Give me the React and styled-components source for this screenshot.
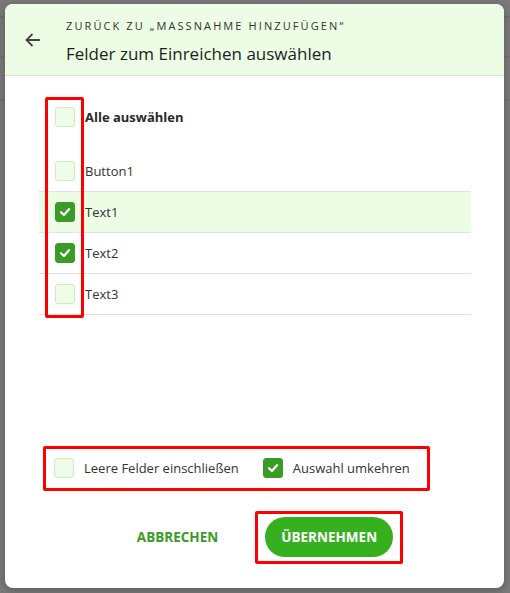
import styled, { createGlobalStyle } from "styled-components";

const GlobalStyle = createGlobalStyle`
  html, body {
    margin: 0;
    padding: 0;
    height: 100%;
  }
  body {
    background: #797979;
    font-family: "Open Sans", "Noto Sans", Arial, sans-serif;
    color: #222;
  }
`;

const fields = [
  { label: "Button1", checked: false },
  { label: "Text1", checked: true, active: true },
  { label: "Text2", checked: true },
  { label: "Text3", checked: false },
];

const Check = ({ checked }) => (
  <Box $checked={checked}>
    {checked && (
      <svg width="14" height="14" viewBox="0 0 14 14">
        <path
          d="M3 7.2 L5.9 10 L11 4.2"
          fill="none"
          stroke="#fff"
          strokeWidth="2.2"
          strokeLinecap="round"
          strokeLinejoin="round"
        />
      </svg>
    )}
  </Box>
);

const App = () => {
  return (
    <>
      <GlobalStyle />
      <Page>
        <Dialog>
          <Header>
            <BackButton aria-label="Zurück">
              <svg width="18" height="18" viewBox="0 0 18 18">
                <path
                  d="M16 9 H2.5 M8.5 3 L2.5 9 L8.5 15"
                  fill="none"
                  stroke="#444"
                  strokeWidth="1.8"
                />
              </svg>
            </BackButton>
            <HeaderText>
              <Overline>Zurück zu „Maßnahme hinzufügen“</Overline>
              <Title>Felder zum Einreichen auswählen</Title>
            </HeaderText>
          </Header>

          <Body>
            <List>
              <AllRow>
                <Check checked={false} />
                <AllLabel>Alle auswählen</AllLabel>
              </AllRow>
              {fields.map((f) => (
                <Row key={f.label} $active={f.active}>
                  <Check checked={f.checked} />
                  <RowLabel>{f.label}</RowLabel>
                </Row>
              ))}
              <Marker $top="0px" $left="6px" $width="39px" $height="221px" />
            </List>

            <Options>
              <Option>
                <Check checked={false} />
                <span>Leere Felder einschließen</span>
              </Option>
              <Option>
                <Check checked={true} />
                <span>Auswahl umkehren</span>
              </Option>
              <Marker $top="-12px" $left="4px" $width="387px" $height="45px" />
            </Options>

            <Footer>
              <TextButton>Abbrechen</TextButton>
              <ApplyWrap>
                <PrimaryButton>Übernehmen</PrimaryButton>
                <Marker $top="-6px" $left="-10px" $width="148px" $height="53px" />
              </ApplyWrap>
            </Footer>
          </Body>
        </Dialog>
      </Page>
    </>
  );
};

const Page = styled.div`
  min-height: 593px;
  padding: 4px 6px 5px 5px;
  box-sizing: border-box;
  background: linear-gradient(
    to bottom,
    transparent 16px,
    #6f6f6f 16px,
    #6f6f6f 18px,
    transparent 18px,
    transparent 56px,
    #717171 56px,
    #717171 58px,
    transparent 58px,
    transparent 99px,
    #727272 99px,
    #727272 101px,
    transparent 101px
  );
`;

const Dialog = styled.div`
  width: 499px;
  height: 584px;
  background: #ffffff;
  border-radius: 8px;
  overflow: hidden;
  display: flex;
  flex-direction: column;
  box-shadow: 0 2px 8px rgba(0, 0, 0, 0.25);
`;

const Header = styled.div`
  height: 72px;
  flex-shrink: 0;
  background: #ecfce5;
  border-bottom: 1px solid #d3e8cb;
  display: flex;
  align-items: center;
  box-sizing: border-box;
  padding-left: 17px;
`;

const BackButton = styled.button`
  border: none;
  background: none;
  padding: 0;
  width: 22px;
  height: 22px;
  display: flex;
  align-items: center;
  justify-content: center;
  margin-right: 22px;
  margin-top: 1px;
  cursor: pointer;
`;

const HeaderText = styled.div`
  display: flex;
  flex-direction: column;
  margin-top: 5px;
`;

const Overline = styled.div`
  font-size: 11px;
  letter-spacing: 2.1px;
  text-transform: uppercase;
  color: #333;
  line-height: 16px;
`;

const Title = styled.div`
  font-size: 17px;
  color: #1e1e1e;
  line-height: 24px;
  margin-top: 8px;
`;

const Body = styled.div`
  flex: 1;
  display: flex;
  flex-direction: column;
  padding: 21px 33px 0 34px;
`;

const List = styled.div`
  position: relative;
  flex: 1;
`;

const AllRow = styled.div`
  display: flex;
  align-items: center;
  gap: 10px;
  height: 40px;
  padding-left: 16px;
  margin-bottom: 14px;
`;

const AllLabel = styled.span`
  font-weight: 700;
  font-size: 13px;
  color: #2a2a2a;
`;

const Row = styled.div`
  display: flex;
  align-items: center;
  gap: 10px;
  height: 40px;
  padding-left: 16px;
  border-bottom: 1px solid #e2e2e2;
  background: ${(p) => (p.$active ? "#edfce5" : "transparent")};
`;

const RowLabel = styled.span`
  font-size: 13px;
  color: #333;
`;

const Box = styled.span`
  width: 20px;
  height: 20px;
  box-sizing: border-box;
  border-radius: 3px;
  flex-shrink: 0;
  display: flex;
  align-items: center;
  justify-content: center;
  background: ${(p) => (p.$checked ? "#3a9c27" : "#eefce8")};
  border: 1px solid ${(p) => (p.$checked ? "#3a9c27" : "#c8efbd")};
`;

const Marker = styled.div`
  position: absolute;
  top: ${(p) => p.$top};
  left: ${(p) => p.$left};
  width: ${(p) => p.$width};
  height: ${(p) => p.$height};
  border: 3px solid #ff0000;
  box-sizing: border-box;
  border-radius: 2px;
  pointer-events: none;
`;

const Options = styled.div`
  position: relative;
  display: flex;
  align-items: center;
  gap: 24px;
  padding-left: 15px;
  height: 20px;
  margin-bottom: 39px;
`;

const Option = styled.label`
  display: flex;
  align-items: center;
  gap: 10px;
  font-size: 13px;
  color: #333;
`;

const Footer = styled.div`
  display: flex;
  justify-content: center;
  align-items: center;
  gap: 31px;
  height: 40px;
  margin-bottom: 31px;
  margin-left: 4px;
`;

const TextButton = styled.button`
  border: none;
  background: none;
  color: #3a9c27;
  font-family: inherit;
  font-weight: 700;
  font-size: 13.5px;
  text-transform: uppercase;
  padding: 0 16px;
  height: 40px;
  cursor: pointer;
`;

const ApplyWrap = styled.div`
  position: relative;
`;

const PrimaryButton = styled.button`
  border: none;
  background: #36b01f;
  color: #fff;
  font-family: inherit;
  font-weight: 700;
  font-size: 13.5px;
  text-transform: uppercase;
  height: 40px;
  padding: 0 16px;
  border-radius: 20px;
  cursor: pointer;
`;

export default App;
